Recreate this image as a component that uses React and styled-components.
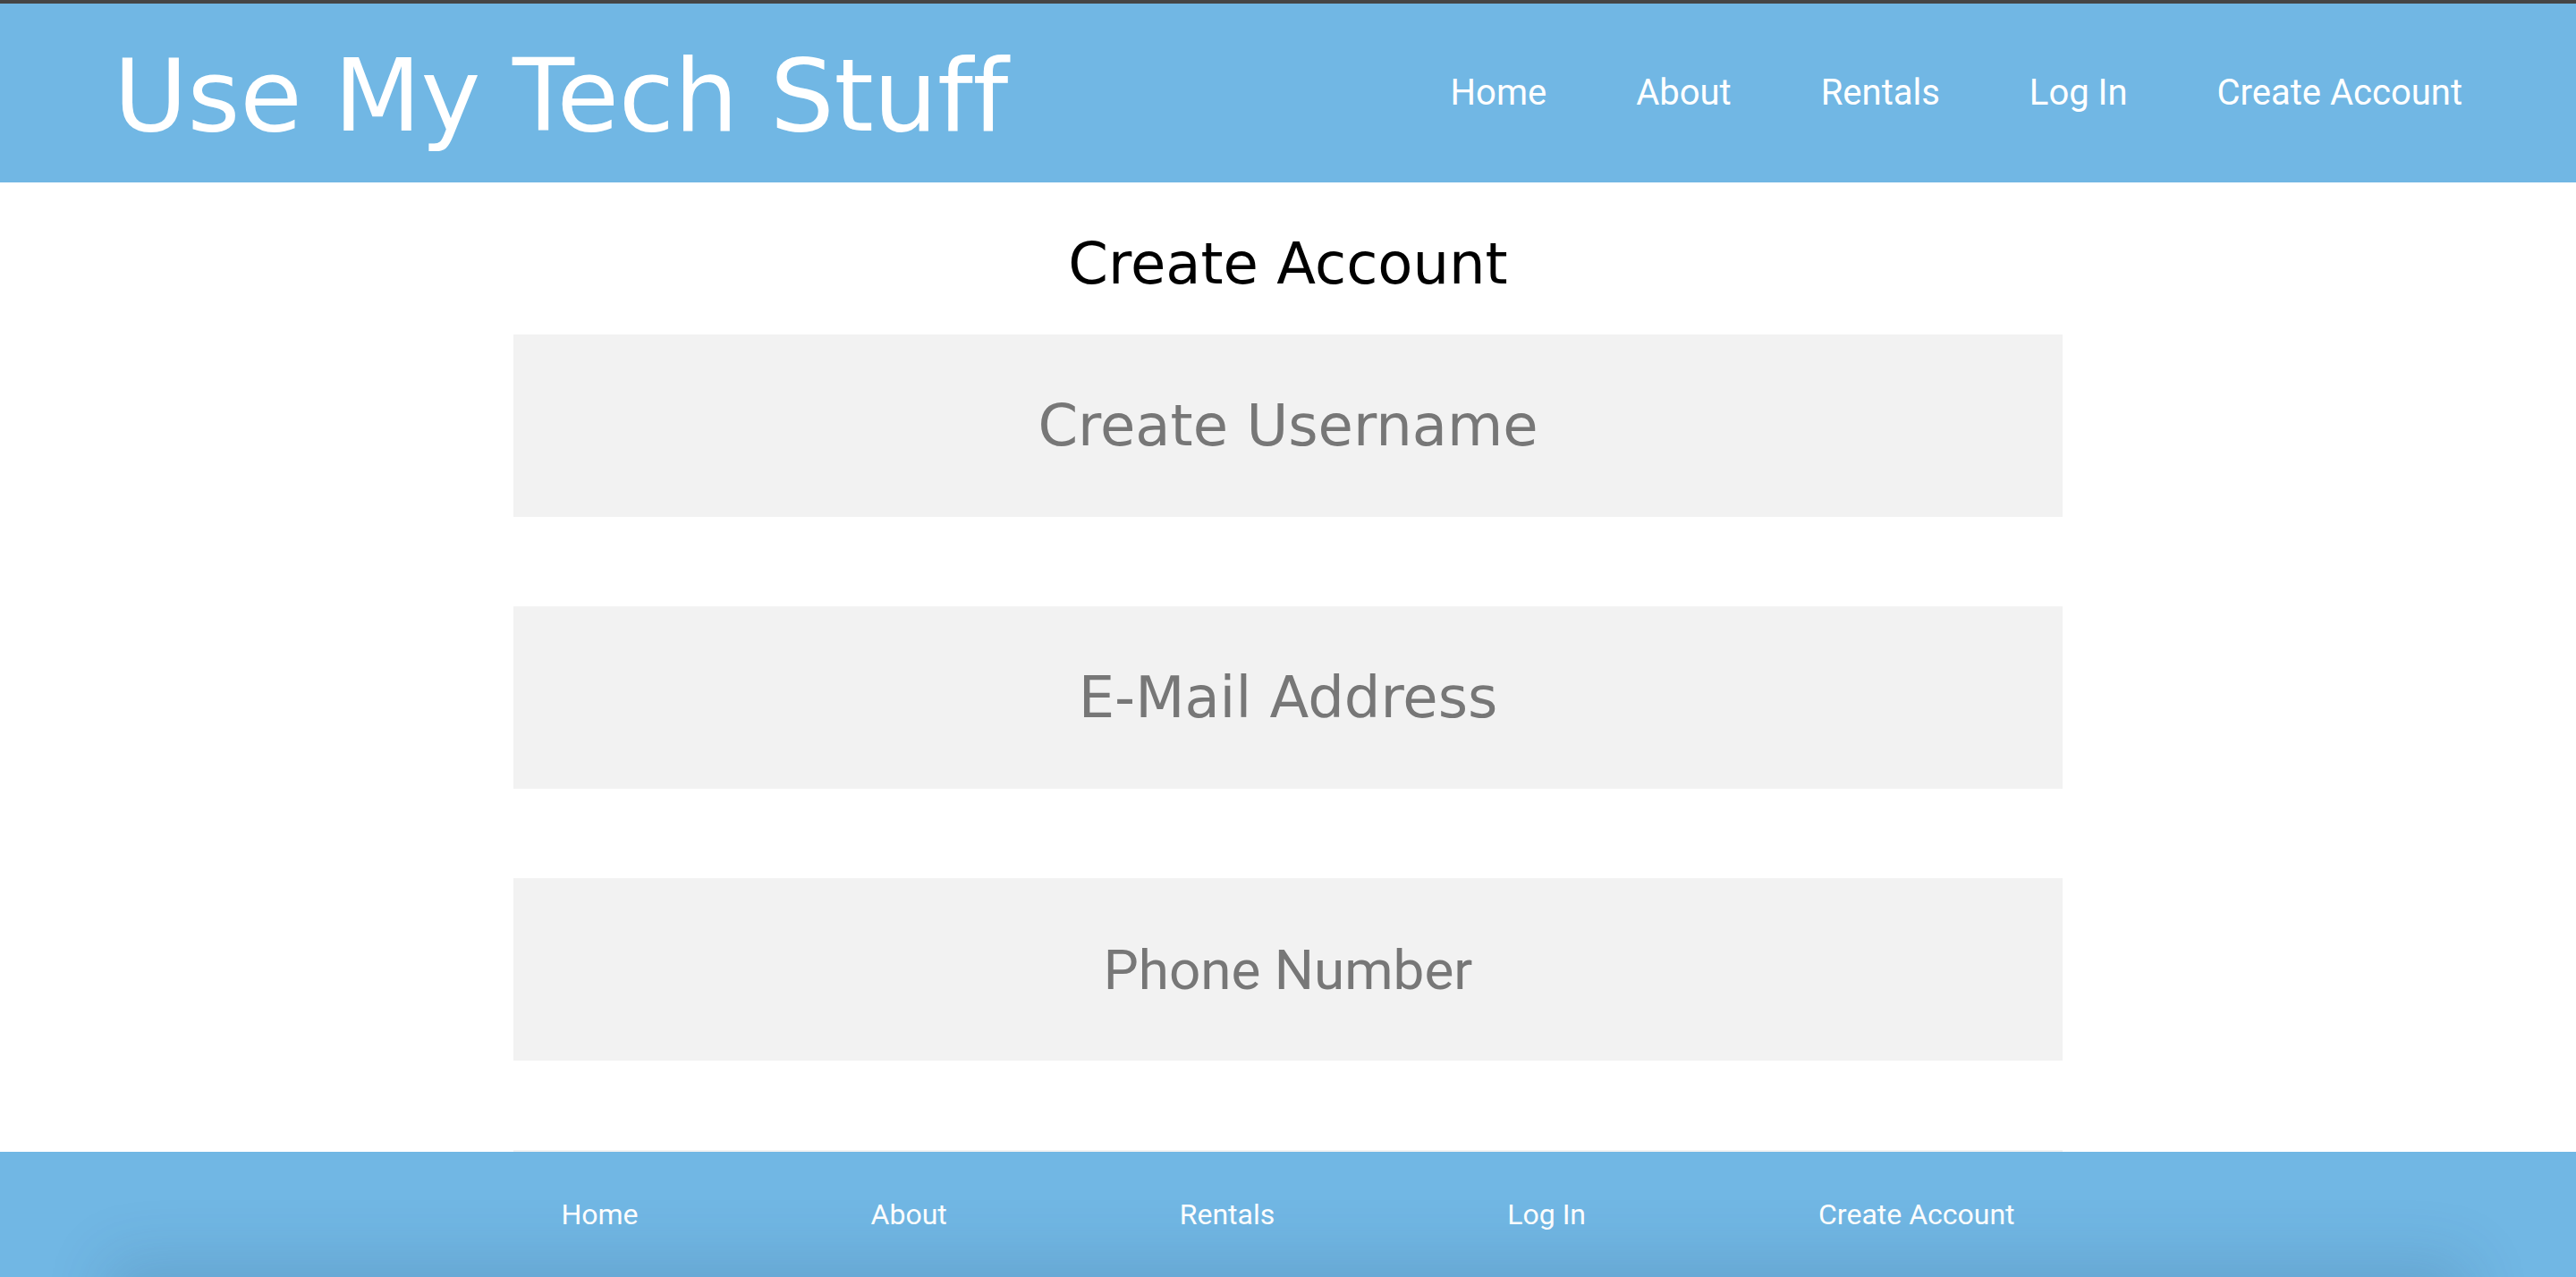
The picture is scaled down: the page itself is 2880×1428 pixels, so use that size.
import React from "react";
import styled, { createGlobalStyle } from "styled-components";

const GlobalStyle = createGlobalStyle`
  html, body {
    margin: 0;
    padding: 0;
    background: #ffffff;
  }
  body {
    font-family: "DejaVu Sans", "Liberation Sans", sans-serif;
  }
  * {
    box-sizing: border-box;
  }
`;

const blue = "#71b7e4";
const montFont = `"DejaVu Sans", "Liberation Sans", sans-serif`;
const navFont = `Roboto, "Liberation Sans", sans-serif`;

const TopEdge = styled.div`
  height: 4px;
  background: #454545;
`;

const Header = styled.header`
  height: 200px;
  background: ${blue};
  display: flex;
  align-items: center;
  justify-content: space-between;
  padding: 0 127px 0 127px;
`;

const Title = styled.h1`
  margin: 0;
  padding-top: 6px;
  font-family: ${montFont};
  font-weight: 400;
  font-size: 113px;
  line-height: 1;
  color: #ffffff;
  letter-spacing: -0.2px;
`;

const Nav = styled.nav`
  display: flex;
  align-items: center;
  gap: ${(p) => p.$gap}px;
`;

const NavLink = styled.a`
  font-family: ${navFont};
  font-size: ${(p) => p.$size}px;
  font-weight: 400;
  color: #ffffff;
  text-decoration: none;
  line-height: 1;
  cursor: pointer;
`;

const Main = styled.main`
  display: flex;
  flex-direction: column;
  align-items: center;
  padding-bottom: 200px;
`;

const Heading = styled.h2`
  margin: 54px 0 42px;
  font-family: ${montFont};
  font-weight: 400;
  font-size: 64px;
  line-height: 74px;
  color: #000000;
`;

const Form = styled.form`
  display: flex;
  flex-direction: column;
  align-items: center;
  gap: 100px;
`;

const Field = styled.input`
  width: 1732px;
  height: 204px;
  border: none;
  outline: none;
  background: #f2f2f2;
  text-align: center;
  font-family: ${(p) => (p.$roboto ? navFont : montFont)};
  font-size: ${(p) => (p.$roboto ? 62 : 64)}px;
  color: #333;
  &::placeholder {
    color: #777777;
  }
`;

const Footer = styled.footer`
  position: fixed;
  left: 0;
  right: 0;
  bottom: 0;
  height: 140px;
  background: ${blue};
  display: flex;
  align-items: center;
  justify-content: center;
  overflow: hidden;
  &::after {
    content: "";
    position: absolute;
    left: 140px;
    right: 140px;
    top: 100%;
    height: 60px;
    box-shadow: 0 0 70px 20px rgba(40, 70, 100, 0.16);
    pointer-events: none;
  }
`;

const links = ["Home", "About", "Rentals", "Log In", "Create Account"];

export default function App() {
  return (
    <>
      <GlobalStyle />
      <TopEdge />
      <Header>
        <Title>Use My Tech Stuff</Title>
        <Nav $gap={100}>
          {links.map((l) => (
            <NavLink key={l} $size={40}>
              {l}
            </NavLink>
          ))}
        </Nav>
      </Header>
      <Main>
        <Heading>Create Account</Heading>
        <Form onSubmit={(e) => e.preventDefault()}>
          <Field type="text" placeholder="Create Username" />
          <Field type="email" placeholder="E-Mail Address" />
          <Field type="tel" $roboto placeholder="Phone Number" />
          <Field type="password" placeholder="Create Password" />
        </Form>
      </Main>
      <Footer>
        <Nav $gap={260}>
          {links.map((l) => (
            <NavLink key={l} $size={32}>
              {l}
            </NavLink>
          ))}
        </Nav>
      </Footer>
    </>
  );
}
